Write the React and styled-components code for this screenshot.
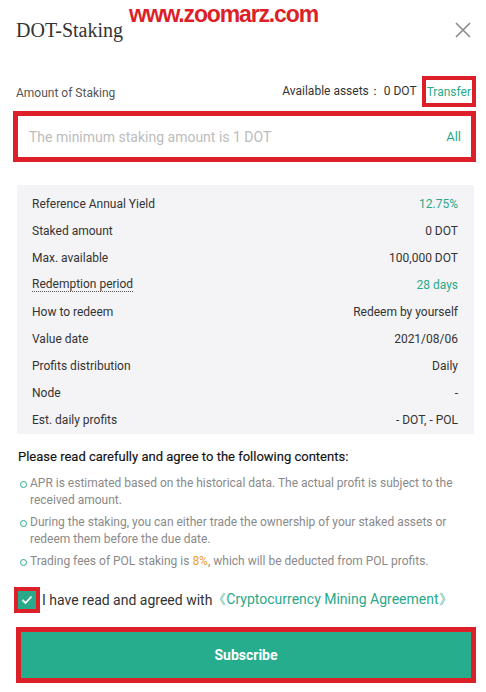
import React from "react";
import styled, { createGlobalStyle, css } from "styled-components";

const Global = createGlobalStyle`
  html, body { margin: 0; padding: 0; background: #fff; }
  body { font-family: Roboto, "Noto Sans", "Liberation Sans", sans-serif; color: #333; }
  * { box-sizing: border-box; }
`;

const RED = "#dc1f28";
const GREEN = "#2aa98a";

const Modal = styled.div`
  position: relative;
  width: 486px;
  height: 692px;
  padding: 0 10px 0 13px;
  overflow: hidden;
`;

const Header = styled.div`
  display: flex;
  justify-content: space-between;
  align-items: center;
  height: 58px;
  padding: 2px 5px 0 3px;
`;

const Title = styled.h1`
  margin: 0;
  font-family: "Liberation Serif", "DejaVu Serif", serif;
  font-weight: 400;
  font-size: 20px;
  color: #333;
`;

const Watermark = styled.div`
  position: absolute;
  left: 129px;
  top: 1px;
  font-family: "Liberation Sans", Arial, sans-serif;
  font-weight: 700;
  font-size: 23px;
  letter-spacing: -1.15px;
  color: ${RED};
`;

const CloseBtn = styled.button`
  border: 0;
  background: none;
  padding: 0;
  width: 16px;
  height: 16px;
  display: flex;
  cursor: pointer;
`;

const AmountRow = styled.div`
  display: flex;
  justify-content: space-between;
  align-items: center;
  height: 34px;
  margin-top: 16px;
  padding-left: 3px;
  font-size: 12px;
  color: #555;
`;

const AmountLabel = styled.span`
  padding-top: 3px;
`;

const Assets = styled.div`
  display: flex;
  align-items: center;
  gap: 5px;
  color: #333;
`;

const Marked = styled.span`
  ${(p) =>
    p.$marked &&
    css`
      border: 4px solid ${RED};
    `}
`;

const TransferLink = styled(Marked)`
  color: ${GREEN};
  padding: 5px 1px 4px 1px;
  line-height: 14px;
`;

const InputBox = styled.div`
  display: flex;
  justify-content: space-between;
  align-items: center;
  height: 51px;
  margin-top: 3px;
  border: 5px solid ${RED};
  padding: 0 10px 0 11px;
  font-size: 14px;
`;

const Placeholder = styled.span`
  color: #bcbcbc;
`;

const AllLink = styled.span`
  color: ${GREEN};
  font-size: 13px;
`;

const Panel = styled.div`
  margin: 23px 2px 0 4px;
  background: #f4f4f6;
  padding: 5px 16px 1px 15px;
`;

const Row = styled.div`
  display: flex;
  justify-content: space-between;
  align-items: center;
  height: 27px;
  font-size: 12px;
`;

const Label = styled.span`
  color: #333;
  ${(p) =>
    p.$dotted &&
    css`
      border-bottom: 1px dotted #555;
      line-height: 14px;
    `}
`;

const Value = styled.span`
  color: ${(p) => (p.$green ? GREEN : "#333")};
`;

const Notice = styled.div`
  margin-top: 15px;
  padding-left: 5px;
`;

const NoticeTitle = styled.div`
  font-size: 13px;
  font-weight: 400;
  color: #111;
  -webkit-text-stroke: 0.15px #111;
  margin-bottom: 11px;
`;

const List = styled.ul`
  list-style: none;
  margin: 0;
  padding: 0;
  display: flex;
  flex-direction: column;
  gap: 5px;
`;

const Item = styled.li`
  position: relative;
  padding-left: 12px;
  font-size: 12px;
  line-height: 17px;
  color: #8a8a8a;
  &::before {
    content: "";
    position: absolute;
    left: 2px;
    top: 6px;
    width: 5px;
    height: 5px;
    border: 1px solid ${GREEN};
    border-radius: 50%;
  }
`;

const Highlight = styled.span`
  color: #f0a12b;
`;

const AgreeRow = styled.div`
  display: flex;
  align-items: center;
  margin-top: 17px;
  font-size: 14px;
  color: #333;
`;

const CheckFrame = styled.span`
  display: inline-flex;
  border: 4px solid ${RED};
  margin-left: 1px;
`;

const Check = styled.span`
  width: 18px;
  height: 18px;
  background: ${GREEN};
  display: flex;
  align-items: center;
  justify-content: center;
`;

const AgreeText = styled.span`
  margin-left: 2px;
`;

const AgreeLink = styled.span`
  color: ${GREEN};
`;

const ButtonFrame = styled.div`
  margin: 14px 0 0 3px;
  border: 5px solid ${RED};
`;

const SubmitButton = styled.button`
  width: 100%;
  height: 46px;
  border: 0;
  background: #26ad8d;
  color: #fff;
  font-family: Roboto, sans-serif;
  font-weight: 700;
  font-size: 14px;
  cursor: pointer;
`;

const rows = [
  { label: "Reference Annual Yield", value: "12.75%", green: true },
  { label: "Staked amount", value: "0 DOT" },
  { label: "Max. available", value: "100,000 DOT" },
  { label: "Redemption period", value: "28 days", green: true, dotted: true },
  { label: "How to redeem", value: "Redeem by yourself" },
  { label: "Value date", value: "2021/08/06" },
  { label: "Profits distribution", value: "Daily" },
  { label: "Node", value: "-" },
  { label: "Est. daily profits", value: "- DOT, - POL" },
];

export default function App() {
  return (
    <>
      <Global />
      <Modal>
        <Header>
          <Title>DOT-Staking</Title>
          <CloseBtn aria-label="close">
            <svg width="16" height="16" viewBox="0 0 16 16">
              <path d="M1 1 L15 15 M15 1 L1 15" stroke="#8a8a8a" strokeWidth="1.6" fill="none" />
            </svg>
          </CloseBtn>
        </Header>
        <Watermark>www.zoomarz.com</Watermark>

        <AmountRow>
          <AmountLabel>Amount of Staking</AmountLabel>
          <Assets>
            <span>Available assets：&nbsp;0 DOT</span>
            <TransferLink $marked>Transfer</TransferLink>
          </Assets>
        </AmountRow>

        <InputBox>
          <Placeholder>The minimum staking amount is 1 DOT</Placeholder>
          <AllLink>All</AllLink>
        </InputBox>

        <Panel>
          {rows.map((r) => (
            <Row key={r.label}>
              <Label $dotted={r.dotted}>{r.label}</Label>
              <Value $green={r.green}>{r.value}</Value>
            </Row>
          ))}
        </Panel>

        <Notice>
          <NoticeTitle>Please read carefully and agree to the following contents:</NoticeTitle>
          <List>
            <Item>APR is estimated based on the historical data. The actual profit is subject to the received amount.</Item>
            <Item>During the staking, you can either trade the ownership of your staked assets or redeem them before the due date.</Item>
            <Item>
              Trading fees of POL staking is <Highlight>8%</Highlight>, which will be deducted from POL profits.
            </Item>
          </List>
        </Notice>

        <AgreeRow>
          <CheckFrame>
            <Check>
              <svg width="12" height="10" viewBox="0 0 12 10">
                <path d="M1.5 5 L4.5 8 L10.5 1.5" stroke="#fff" strokeWidth="1.8" fill="none" />
              </svg>
            </Check>
          </CheckFrame>
          <AgreeText>I have read and agreed with</AgreeText>
          <AgreeLink>《Cryptocurrency Mining Agreement》</AgreeLink>
        </AgreeRow>

        <ButtonFrame>
          <SubmitButton>Subscribe</SubmitButton>
        </ButtonFrame>
      </Modal>
    </>
  );
}
